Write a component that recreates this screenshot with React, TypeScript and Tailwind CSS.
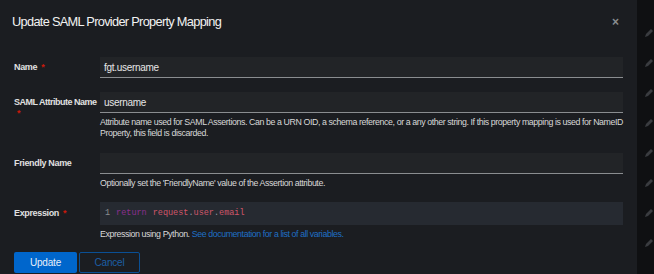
import React from "react";

const font = { fontFamily: "'Liberation Sans', Arial, sans-serif" };

function Pencil() {
  return (
    <svg width="10" height="10" viewBox="0 0 10 10" className="block">
      <path d="M1 9 L2 6 L7 1 L9 3 L4 8 Z" fill="#3a3c40" />
    </svg>
  );
}

function Label({ children, req }: { children: React.ReactNode; req?: boolean }) {
  return (
    <div className="w-[86px] shrink-0 pt-[5px] text-[9px] leading-[11px] font-bold text-[#e0e0e0] tracking-[-0.35px] whitespace-nowrap">
      {children}
      {req && <span className="text-[#c9190b] ml-[4px]">*</span>}
    </div>
  );
}

function Input({ value }: { value?: string }) {
  return (
    <div className="h-[21px] bg-[#222427] border-b border-[#8a8d90] flex items-center pl-[4px] text-[10px] tracking-[-0.3px] text-[#e6e6e6]">
      {value}
    </div>
  );
}

function Helper({ children }: { children: React.ReactNode }) {
  return (
    <div className="mt-[4px] text-[8.8px] leading-[11px] tracking-[-0.4px] text-[#d8d8d8] whitespace-nowrap">
      {children}
    </div>
  );
}

export default function App() {
  return (
    <div className="w-[654px] h-[274px] flex overflow-hidden" style={font}>
      <div className="w-[641px] h-full bg-[#1b1d21] relative pl-[14px] pr-[14px]">
        <div className="flex items-center h-[20px] mt-[12px] ml-[-2px]">
          <div className="text-[12.8px] text-[#f2f2f2] tracking-[-0.7px]">Update SAML Provider Property Mapping</div>
        </div>
        <div className="absolute top-[16px] right-[18px] text-[12px] font-bold text-[#8a8d90] leading-none">×</div>

        <div className="flex mt-[25px]">
          <Label req>Name</Label>
          <div className="flex-1">
            <Input value="fgt.username" />
          </div>
        </div>

        <div className="flex mt-[14px]">
          <div className="w-[86px] shrink-0 pt-[5px] text-[9px] leading-[11px] font-bold text-[#e0e0e0] tracking-[-0.5px] whitespace-nowrap">
            SAML Attribute Name
            <div className="text-[#c9190b] pl-[3px]">*</div>
          </div>
          <div className="flex-1">
            <Input value="username" />
            <Helper>
              Attribute name used for SAML Assertions. Can be a URN OID, a schema reference, or a any other string. If this property mapping is used for NameID
              <br />
              Property, this field is discarded.
            </Helper>
          </div>
        </div>

        <div className="flex mt-[14px]">
          <Label>Friendly Name</Label>
          <div className="flex-1">
            <Input />
            <Helper>Optionally set the 'FriendlyName' value of the Assertion attribute.</Helper>
          </div>
        </div>

        <div className="flex mt-[13px]">
          <div className="w-[86px] shrink-0 pt-[6px] text-[9px] leading-[11px] font-bold text-[#e0e0e0] tracking-[-0.35px]">
            Expression<span className="text-[#c9190b] ml-[4px]">*</span>
          </div>
          <div className="flex-1">
            <div
              className="h-[23px] bg-[#262a31] flex items-center pl-[5px] text-[8.5px]"
              style={{ fontFamily: "'Liberation Mono', 'DejaVu Sans Mono', monospace" }}
            >
              <span className="text-[#8a8d90]">1</span>
              <span className="ml-[6px] text-[#8b2f8f]">return</span>
              <span className="ml-[6px] text-[#d0566a]">request</span>
              <span className="text-[#8a9aa8]">.</span>
              <span className="text-[#d0566a]">user</span>
              <span className="text-[#8a9aa8]">.</span>
              <span className="text-[#d0566a]">email</span>
            </div>
            <Helper>
              Expression using Python. <span className="text-[#1f6fc4]">See documentation for a list of all variables.</span>
            </Helper>
          </div>
        </div>

        <div className="flex mt-[12px] gap-[2px]">
          <div className="w-[63px] h-[21px] bg-[#0066cc] rounded-[2px] flex items-center justify-center text-[10px] tracking-[-0.2px] text-[#e8f0fa]">
            Update
          </div>
          <div className="w-[61px] h-[21px] border border-[#0a4f94] rounded-[2px] flex items-center justify-center text-[10px] tracking-[-0.2px] text-[#1c5fa6]">
            Cancel
          </div>
        </div>
      </div>
      <div className="flex-1 h-full bg-[#0f1012] flex flex-col pl-[7px] pt-[28px] gap-[20px]">
        {Array.from({ length: 8 }).map((_, i) => (
          <Pencil key={i} />
        ))}
      </div>
    </div>
  );
}
